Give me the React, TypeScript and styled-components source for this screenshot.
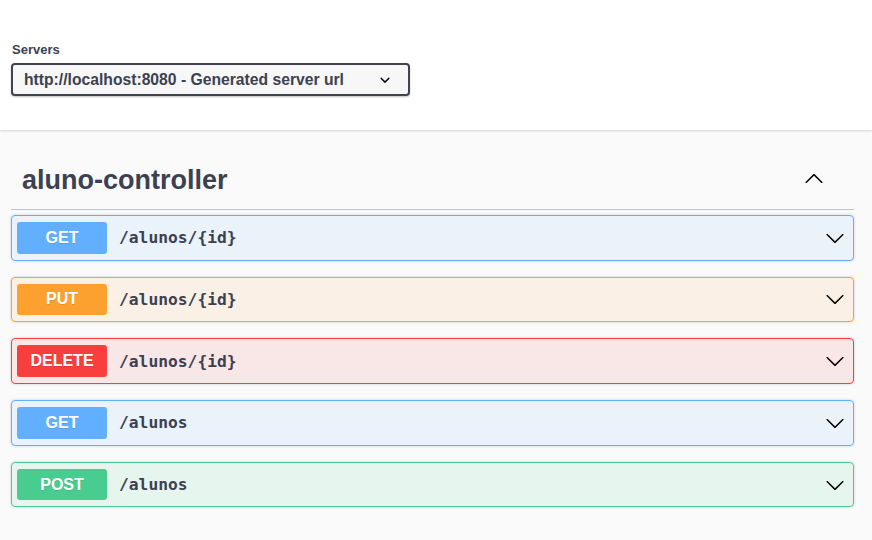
import React from "react";
import styled, { createGlobalStyle } from "styled-components";

const Global = createGlobalStyle`
  html, body { margin: 0; padding: 0; }
  body {
    background: #fafafa;
    font-family: "Liberation Sans", Arial, sans-serif;
    color: #3b4151;
  }
`;

const SchemeContainer = styled.section`
  background: #fff;
  box-shadow: 0 1px 2px 0 rgba(0, 0, 0, 0.15);
  padding: 42px 0 34px 11px;
  display: flex;
  flex-direction: column;
  gap: 6px;
`;

const ServersLabel = styled.label`
  font-size: 13px;
  font-weight: 700;
  line-height: 15px;
  color: #3b4151;
  padding-left: 1px;
`;

const Select = styled.div`
  box-sizing: border-box;
  width: 399px;
  height: 33px;
  border: 2px solid #41444e;
  border-radius: 4px;
  background: #f7f7f7;
  box-shadow: 0 1px 2px 0 rgba(0, 0, 0, 0.25);
  display: flex;
  align-items: center;
  justify-content: space-between;
  padding: 0 16px 0 11px;
  font-size: 15.7px;
  font-weight: 700;
  color: #3b4151;
`;

const Content = styled.main`
  padding: 0 18px 20px 11px;
`;

const TagHeader = styled.h3`
  margin: 36px 0 5px;
  padding: 0 20px 15px 11px;
  border-bottom: 1px solid rgba(59, 65, 81, 0.3);
  display: flex;
  align-items: flex-start;
  justify-content: space-between;
  font-size: 27px;
  line-height: 28px;
  font-weight: 700;
  color: #3b4151;
`;

const ToggleButton = styled.span`
  display: flex;
  padding: 0 10px;
  margin-top: 2px;
`;

const methodColors: Record<string, string> = {
  GET: "97,175,254",
  PUT: "252,161,48",
  DELETE: "249,62,62",
  POST: "73,204,144",
};

const Opblock = styled.div<{ $rgb: string }>`
  box-sizing: border-box;
  height: 45.5px;
  margin-bottom: 16.2px;
  border: 1px solid rgb(${(p) => p.$rgb});
  background: rgba(${(p) => p.$rgb}, 0.1);
  border-radius: 4px;
  box-shadow: 0 0 3px rgba(0, 0, 0, 0.19);
  display: flex;
  align-items: center;
  padding: 0 8px 0 5px;
`;

const Method = styled.span<{ $rgb: string }>`
  width: 90px;
  height: 31.5px;
  border-radius: 3px;
  background: rgb(${(p) => p.$rgb});
  color: #fff;
  font-size: 16px;
  font-weight: 700;
  text-shadow: 0 1px 0 rgba(0, 0, 0, 0.1);
  display: flex;
  align-items: center;
  justify-content: center;
`;

const Path = styled.span`
  flex: 1;
  padding: 0 12px;
  font-family: "DejaVu Sans Mono", monospace;
  font-size: 16.3px;
  font-weight: 700;
  color: #3b4151;
`;

const ArrowDown = ({ size = 20 }: { size?: number }) => (
  <svg width={size} height={size} viewBox="0 0 20 20" fill="#000">
    <path d="M17.418 6.109c.272-.268.709-.268.979 0s.271.701 0 .969l-7.908 7.83c-.27.268-.707.268-.979 0l-7.908-7.830c-.27-.268-.27-.701 0-.969.271-.268.709-.268.979 0L10 13.25l7.418-7.141z" />
  </svg>
);

const ArrowUp = () => (
  <svg width={20} height={20} viewBox="0 0 20 20" fill="#000">
    <path d="M17.418 14.908c.272.268.709.268.979 0s.271-.701 0-.969l-7.908-7.83c-.27-.268-.707-.268-.979 0l-7.908 7.83c-.27.268-.27.701 0 .969.271.268.709.268.979 0L10 7.767l7.418 7.141z" />
  </svg>
);

const SelectArrow = () => (
  <svg width={14} height={14} viewBox="3 3 14 14" fill="#000">
    <path d="M13.418 7.859a.695.695 0 01.978 0 .68.68 0 010 .969l-3.908 3.83a.697.697 0 01-.979 0l-3.908-3.83a.68.68 0 010-.969.695.695 0 01.978 0L10 11l3.418-3.141z" />
  </svg>
);

const ops = [
  { method: "GET", path: "/alunos/{id}" },
  { method: "PUT", path: "/alunos/{id}" },
  { method: "DELETE", path: "/alunos/{id}" },
  { method: "GET", path: "/alunos" },
  { method: "POST", path: "/alunos" },
];

export default function App() {
  return (
    <>
      <Global />
      <SchemeContainer>
        <ServersLabel>Servers</ServersLabel>
        <Select>
          <span>http://localhost:8080 - Generated server url</span>
          <SelectArrow />
        </Select>
      </SchemeContainer>
      <Content>
        <TagHeader>
          <span>aluno-controller</span>
          <ToggleButton>
            <ArrowUp />
          </ToggleButton>
        </TagHeader>
        {ops.map((op, i) => (
          <Opblock key={i} $rgb={methodColors[op.method]}>
            <Method $rgb={methodColors[op.method]}>{op.method}</Method>
            <Path>{op.path}</Path>
            <ArrowDown />
          </Opblock>
        ))}
      </Content>
    </>
  );
}
